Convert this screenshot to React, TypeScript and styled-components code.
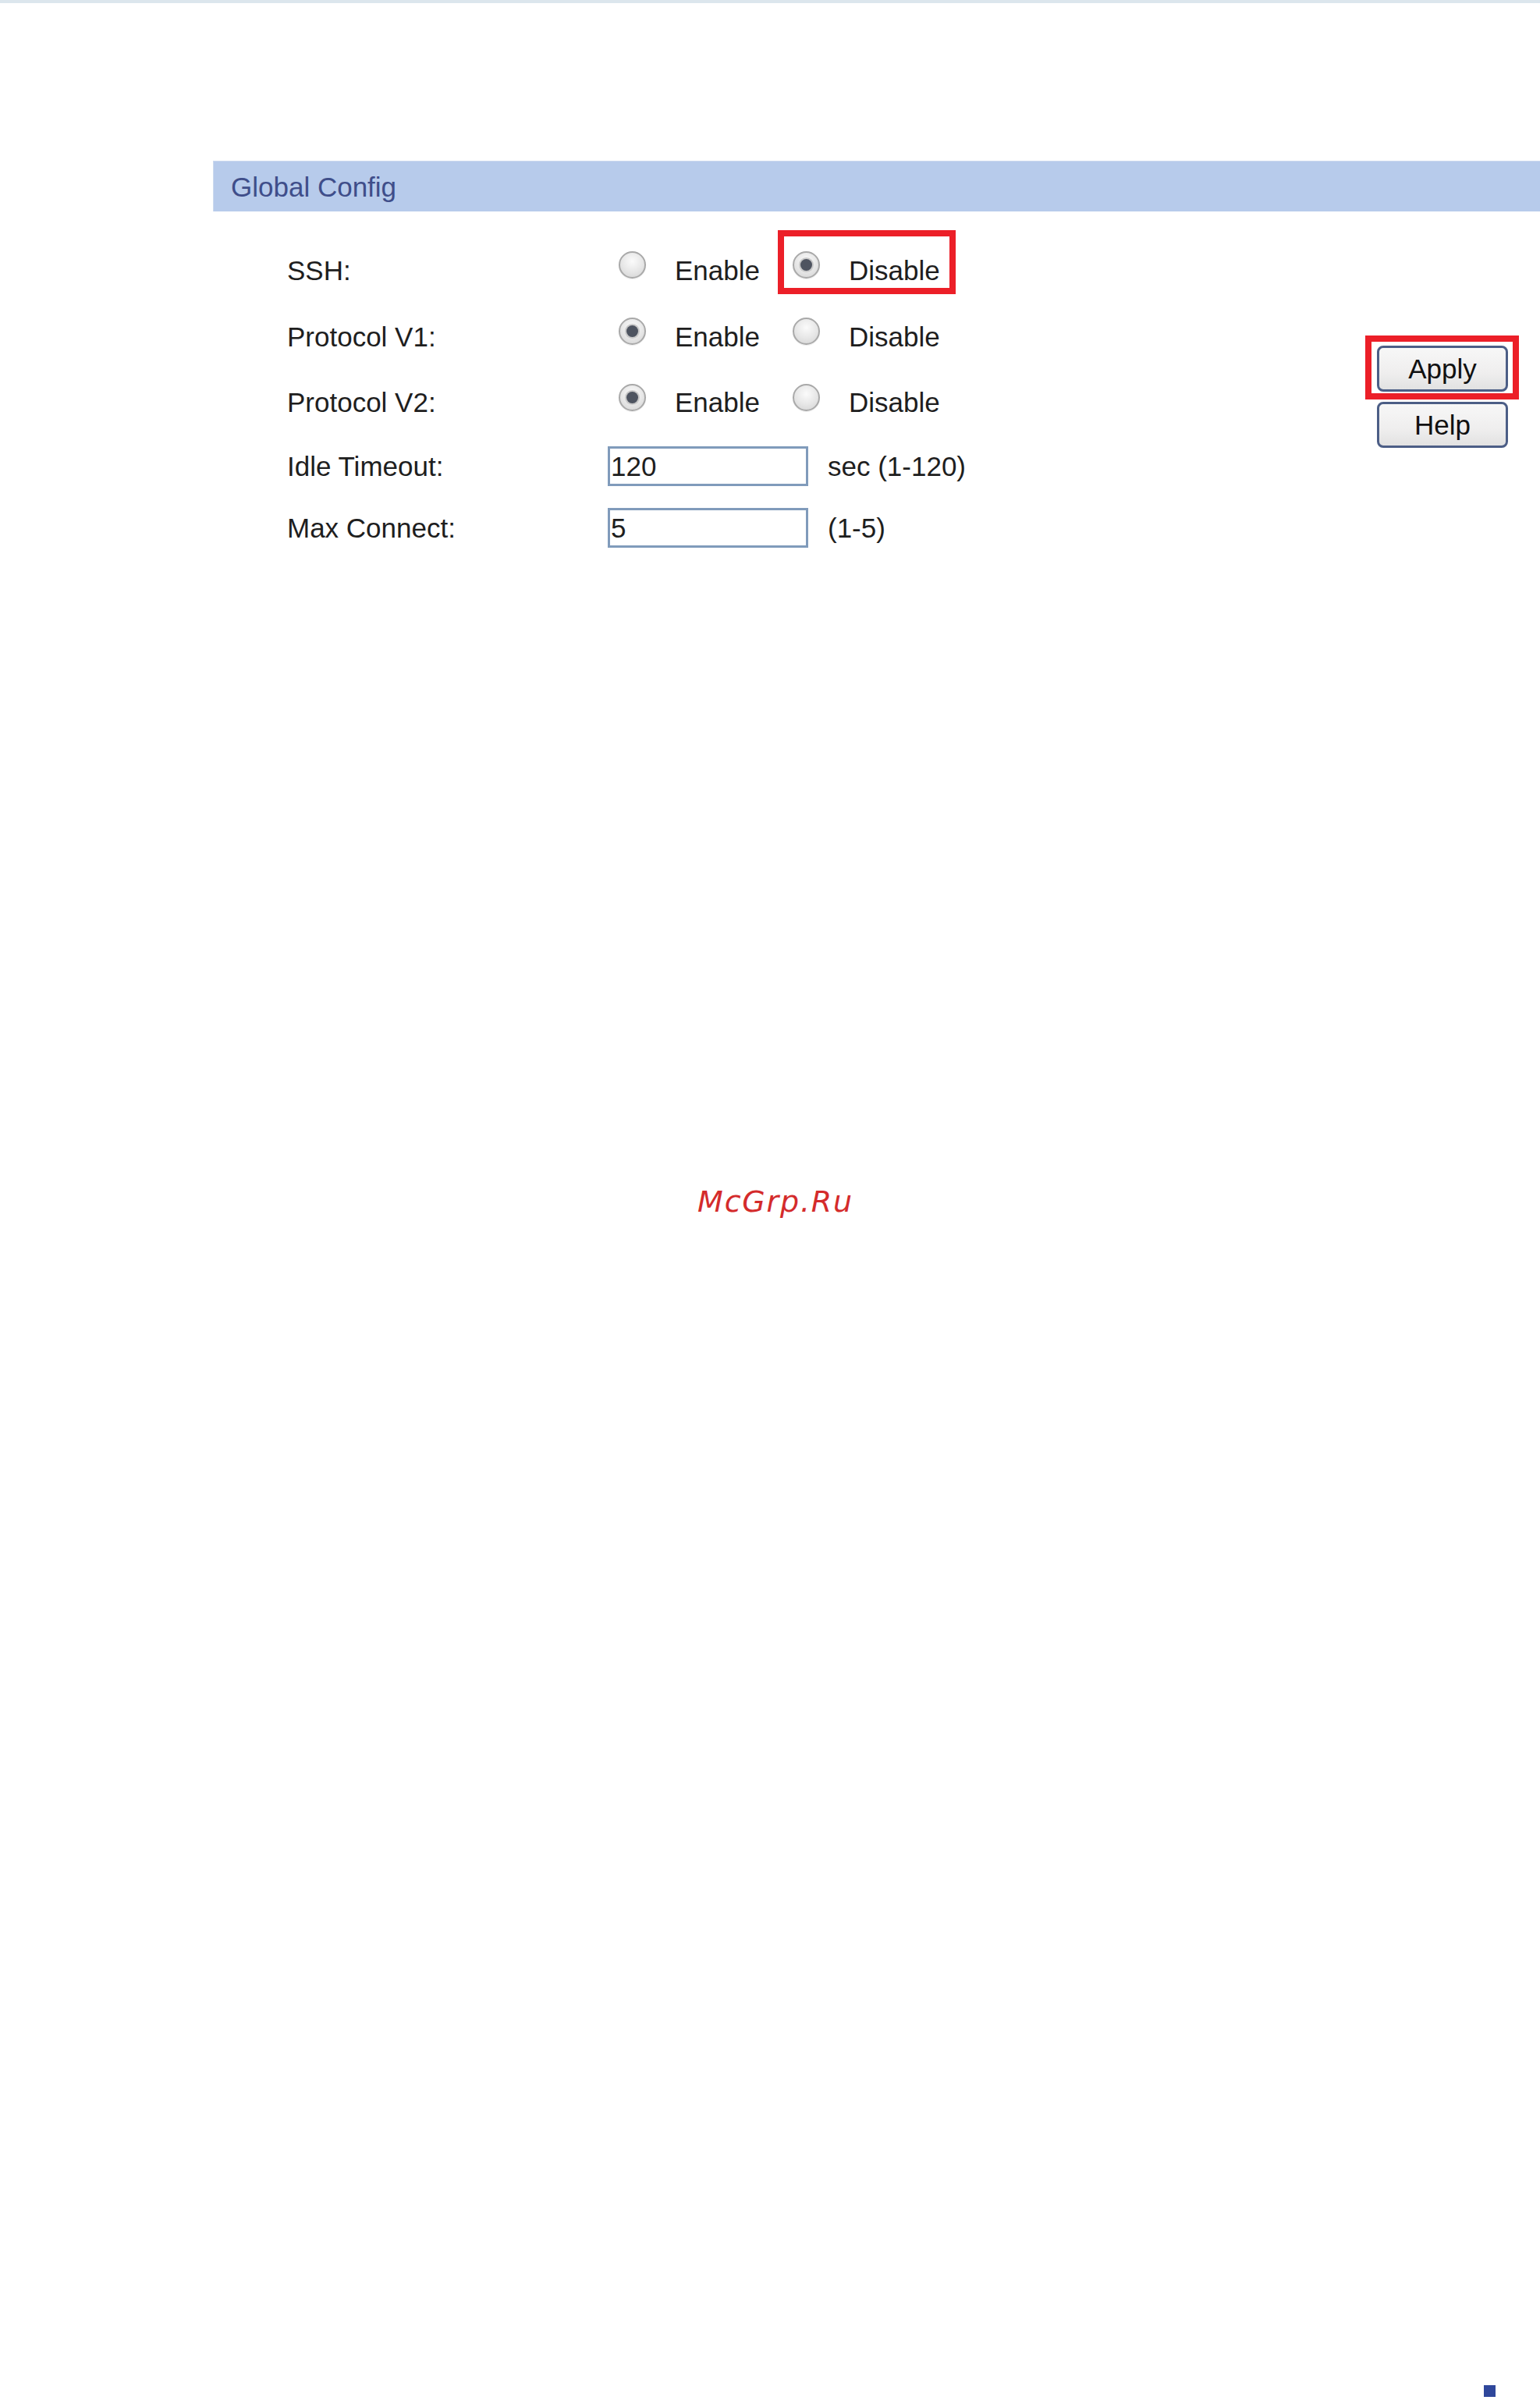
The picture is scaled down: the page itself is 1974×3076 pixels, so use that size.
import React from "react";
import styled, { createGlobalStyle, css } from "styled-components";

const GlobalStyle = createGlobalStyle`
  html, body { margin: 0; padding: 0; background: #ffffff; }
  body { font-family: "Liberation Sans", Arial, sans-serif; color: #1e1e1e; }
  * { box-sizing: border-box; }
`;

const Page = styled.div`
  min-height: 3076px;
  display: flex;
  flex-direction: column;
  background: #ffffff;
`;

const TopRule = styled.div`
  height: 4px;
  background: #dce6ed;
  margin-bottom: 202px;
`;

const SectionHeader = styled.div`
  margin-left: 273px;
  height: 65px;
  line-height: 65px;
  padding-left: 22px;
  background: #b7cbeb;
  border-top: 1px solid #cbd9ef;
  border-left: 1px solid #cbd9ef;
  color: #3f4e8a;
  font-size: 35px;
`;

const Main = styled.div`
  margin-left: 273px;
  display: flex;
  justify-content: space-between;
  align-items: flex-start;
`;

const Form = styled.div`
  padding-left: 95px;
  padding-top: 33px;
  display: flex;
  flex-direction: column;
`;

const Row = styled.div<{ $h: number }>`
  height: ${(p) => p.$h}px;
  display: grid;
  grid-template-columns: 411px auto;
  align-items: center;
  font-size: 35px;
`;

const Label = styled.div`
  line-height: 40px;
  white-space: nowrap;
`;

const Value = styled.div`
  height: 100%;
  display: flex;
  align-items: center;
`;

const Options = styled.div`
  height: 100%;
  display: flex;
  align-items: center;
  gap: 42px;
  padding-left: 14px;
`;

const Option = styled.label<{ $marked?: boolean }>`
  position: relative;
  height: 100%;
  display: flex;
  align-items: center;
  gap: 37px;
  line-height: 40px;
  ${(p) =>
    p.$marked &&
    css`
      &::after {
        content: "";
        position: absolute;
        top: -9px;
        bottom: 12px;
        left: -19px;
        right: -20px;
        border: 8px solid #ec1f28;
        pointer-events: none;
      }
    `}
`;

const Radio = styled.span<{ $checked?: boolean }>`
  flex: none;
  width: 35px;
  height: 35px;
  margin-bottom: 14px;
  border-radius: 50%;
  border: 2px solid #a9a9a9;
  background: radial-gradient(circle at 50% 35%, #fbfbfb 0%, #e6e6e6 55%, #d2d2d2 100%);
  box-shadow: 0 1px 1px rgba(0, 0, 0, 0.08);
  display: flex;
  align-items: center;
  justify-content: center;
  ${(p) =>
    p.$checked &&
    css`
      &::after {
        content: "";
        width: 15px;
        height: 15px;
        border-radius: 50%;
        background: #4e5460;
        box-shadow: 0 0 0 2px #c9c9c9;
      }
    `}
`;

const TextBox = styled.div`
  width: 257px;
  height: 51px;
  border: 3px solid #809bbb;
  padding: 0 1px;
  display: flex;
  align-items: center;
  font-size: 35px;
  color: #1e1e1e;
  background: #ffffff;
`;

const Suffix = styled.span`
  margin-left: 25px;
  line-height: 40px;
`;

const ButtonCol = styled.div`
  margin-top: 172px;
  margin-right: 41px;
  display: flex;
  flex-direction: column;
  gap: 13px;
`;

const ButtonWrap = styled.div<{ $marked?: boolean }>`
  position: relative;
  ${(p) =>
    p.$marked &&
    css`
      &::after {
        content: "";
        position: absolute;
        top: -13px;
        bottom: -10px;
        left: -15px;
        right: -14px;
        border: 8px solid #ec1f28;
        pointer-events: none;
      }
    `}
`;

const Button = styled.button`
  width: 168px;
  height: 59px;
  border: 3px solid #4c5e86;
  border-radius: 8px;
  background: linear-gradient(#f7f7f7 0%, #efeeee 60%, #e2e2e2 100%);
  font-family: "Liberation Sans", Arial, sans-serif;
  font-size: 35px;
  color: #111111;
  padding: 0;
  display: flex;
  align-items: center;
  justify-content: center;
`;

const Watermark = styled.div`
  margin-top: 802px;
  padding-left: 14px;
  text-align: center;
  font-family: "DejaVu Sans", sans-serif;
  font-style: italic;
  font-size: 38px;
  line-height: 44px;
  letter-spacing: 1.8px;
  color: #d42b2b;
`;

const Footer = styled.div`
  margin-top: auto;
  display: flex;
  justify-content: flex-end;
  padding: 0 57px 4px 0;
`;

const PageMark = styled.span`
  width: 15px;
  height: 15px;
  background: #2f479b;
`;

type RadioRow = { label: string; value: "enable" | "disable"; marked?: boolean; h: number };

const radioRows: RadioRow[] = [
  { label: "SSH:", value: "disable", marked: true, h: 85 },
  { label: "Protocol V1:", value: "enable", h: 85 },
  { label: "Protocol V2:", value: "enable", h: 84 },
];

export default function App() {
  return (
    <Page>
      <GlobalStyle />
      <TopRule />
      <SectionHeader>Global Config</SectionHeader>
      <Main>
        <Form>
          {radioRows.map((r) => (
            <Row $h={r.h} key={r.label}>
              <Label>{r.label}</Label>
              <Value>
                <Options>
                  <Option>
                    <Radio $checked={r.value === "enable"} />
                    <span>Enable</span>
                  </Option>
                  <Option $marked={r.marked}>
                    <Radio $checked={r.value === "disable"} />
                    <span>Disable</span>
                  </Option>
                </Options>
              </Value>
            </Row>
          ))}
          <Row $h={79}>
            <Label>Idle Timeout:</Label>
            <Value>
              <TextBox>120</TextBox>
              <Suffix>sec (1-120)</Suffix>
            </Value>
          </Row>
          <Row $h={79}>
            <Label>Max Connect:</Label>
            <Value>
              <TextBox>5</TextBox>
              <Suffix>(1-5)</Suffix>
            </Value>
          </Row>
        </Form>
        <ButtonCol>
          <ButtonWrap $marked>
            <Button>Apply</Button>
          </ButtonWrap>
          <ButtonWrap>
            <Button>Help</Button>
          </ButtonWrap>
        </ButtonCol>
      </Main>
      <Watermark>McGrp.Ru</Watermark>
      <Footer>
        <PageMark />
      </Footer>
    </Page>
  );
}
